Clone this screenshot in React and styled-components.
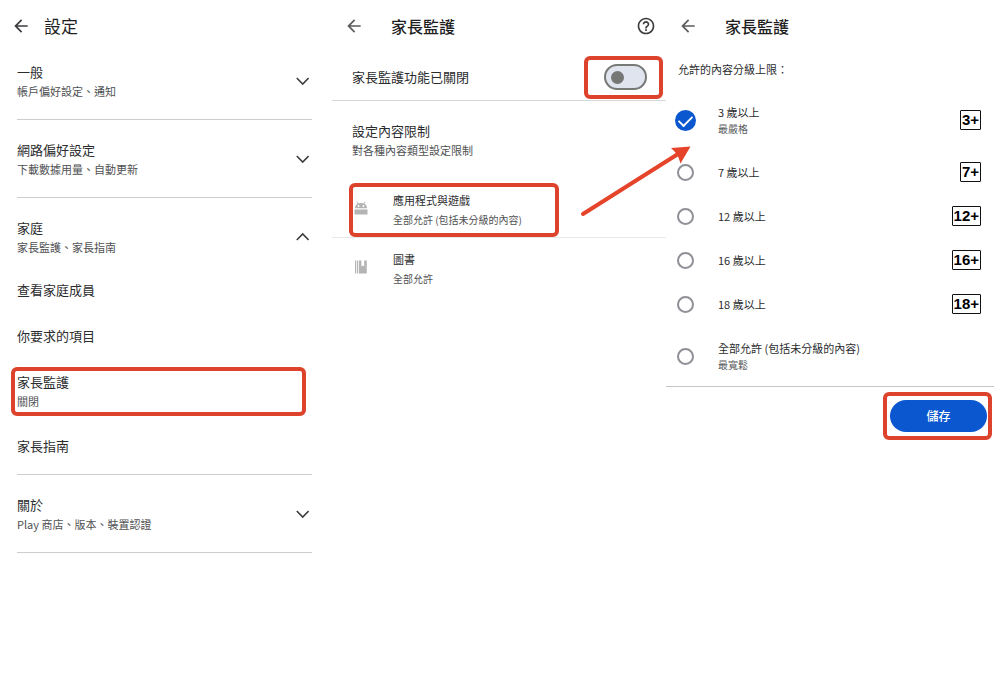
import React, { useState } from 'react';

import styled, { createGlobalStyle } from 'styled-components';
import { MdArrowBack, MdHelpOutline } from 'react-icons/md';

const GlobalStyle = createGlobalStyle`
  * {
    box-sizing: border-box;
  }

  body {
    margin: 0;
    background: #ffffff;
    color: #2b2c2e;
    font-family: 'Noto Sans CJK TC', Roboto, sans-serif;
  }

  button {
    padding: 0;
    border: none;
    background: none;
    color: inherit;
    font: inherit;
    text-align: left;
    cursor: pointer;
  }

  h1, h2, p {
    margin: 0;
    font-weight: 400;
  }
`;

const Page = styled.main`
  display: grid;
  grid-template-columns: 332fr 334fr 328fr;
  align-items: start;
`;

const Panel = styled.section`
  position: relative;
  min-width: 0;
`;

const Header = styled.header`
  display: flex;
  align-items: center;
  gap: ${props => props.$gap || '27px'};
  height: 42px;
  padding: 10px 10px 0 ${props => props.$left || '12px'};
`;

const IconButton = styled.button`
  display: flex;
  color: ${props => props.$color || '#5a5b5d'};
`;

const Heading = styled.h1`
  flex: 1;
  font-size: ${props => props.$size || '16px'};
  font-weight: ${props => props.$weight || 500};
  line-height: 24px;
  color: #1f1f1f;
`;

// Red frame laid over the element that the guide points at
const Marked = styled.div`
  position: relative;

  &::after {
    content: '';
    position: absolute;
    inset: ${props => props.$inset};
    border: 4px solid #dd432c;
    border-radius: 6px;
    pointer-events: none;
  }
`;

const Settings = styled.div`
  padding: 0 20px 0 17px;
`;

const Group = styled.div`
  border-bottom: 1px solid #cdcdcd;
`;

const GroupButton = styled.button`
  display: flex;
  align-items: center;
  justify-content: space-between;
  width: 100%;
  padding: 20px 3px ${props => (props.$open ? '11px' : '19px')} 0;
`;

const Title = styled.span`
  display: block;
  font-size: 13px;
  line-height: 20px;
`;

const Note = styled.span`
  display: block;
  font-size: 11px;
  line-height: 18px;
  color: #505153;
`;

const Items = styled.div`
  padding-bottom: 5px;
`;

const Item = styled.button`
  display: block;
  width: 100%;
  padding: 13px 0;
`;

const SwitchRow = styled.div`
  display: flex;
  align-items: center;
  justify-content: space-between;
  height: 59px;
  padding: 12px 19px 0 20px;
  border-bottom: 1px solid #d6d7d9;
`;

const Switch = styled.input`
  appearance: none;
  display: flex;
  align-items: center;
  width: 43px;
  height: 26px;
  margin: 0;
  padding: 0 5px;
  border: 2px solid #767976;
  border-radius: 13px;
  background: #dfe4ee;
  cursor: pointer;

  &::before {
    content: '';
    width: 13px;
    height: 13px;
    border-radius: 50%;
    background: #747773;
  }

  &:checked {
    justify-content: flex-end;
    border-color: #0b57d0;
    background: #0b57d0;
  }

  &:checked::before {
    background: #ffffff;
  }
`;

const Intro = styled.div`
  padding: 20px 20px 22px;
`;

const ContentItem = styled.button`
  display: flex;
  align-items: center;
  gap: 25px;
  width: 100%;
  padding: ${props => (props.$last ? '11px 20px 8px 22px' : '9px 20px 7px 22px')};
  border-bottom: ${props => (props.$last ? 'none' : '1px solid #e8e8e8')};
`;

const ItemIcon = styled.span`
  padding-bottom: 4px;
`;

const ContentText = styled.span`
  display: block;
  font-size: ${props => (props.$small ? '10px' : '11px')};
  line-height: 20px;
  color: ${props => (props.$small ? '#505153' : '#2b2c2e')};
`;

const Drawing = styled.svg`
  display: block;
  flex: none;
`;

const Arrow = styled.svg`
  position: absolute;
  top: 142px;
  right: -26px;
  z-index: 1;
  pointer-events: none;
`;

const Fields = styled.fieldset`
  min-width: 0;
  margin: 0;
  padding: 0;
  border: none;
  border-bottom: 1px solid #c6c7ca;
`;

const Legend = styled.legend`
  padding: 17px 12px 11px;
  font-size: 11px;
  line-height: 20px;
`;

const Option = styled.label`
  display: flex;
  align-items: center;
  height: ${props => (props.$tall ? '60px' : '44px')};
  padding: 0 13px 0 9px;
  cursor: pointer;
`;

const RadioSlot = styled.span`
  display: flex;
  justify-content: center;
  width: 21px;
  margin-right: 22px;
`;

const Radio = styled.input`
  appearance: none;
  display: flex;
  justify-content: center;
  width: 17px;
  height: 17px;
  margin: 0;
  border: 2px solid #8e9095;
  border-radius: 50%;

  &:checked {
    width: 21px;
    height: 21px;
    border: none;
    background: #0b57d0;
  }

  &:checked::after {
    content: '';
    width: 13px;
    height: 7px;
    margin-top: 5px;
    border: solid #ffffff;
    border-width: 0 0 2px 2px;
    transform: rotate(-45deg) scale(0.9);
  }
`;

const OptionText = styled.span`
  flex: 1;
  font-size: 11px;
  line-height: 18px;
`;

const OptionNote = styled.span`
  display: block;
  font-size: 10px;
  line-height: 16px;
  color: #5a5b5d;
`;

const Badge = styled.span`
  padding: 0 1px;
  border: 1px solid #111111;
  border-radius: 1px;
  color: #000000;
  font-family: 'Liberation Sans Narrow', 'Liberation Sans', sans-serif;
  font-size: 15px;
  font-weight: 700;
  line-height: 18px;
`;

const Footer = styled.footer`
  display: flex;
  justify-content: flex-end;
  padding: 13px 7px 13px 0;
`;

const SaveButton = styled.button`
  display: block;
  width: 97px;
  height: 32px;
  padding-bottom: 2px;
  border-radius: 16px;
  background: #0b57d0;
  color: #ffffff;
  font-size: 12px;
  font-weight: 500;
  text-align: center;
`;

const Chevron = ({ up }) => (
  <Drawing width="14" height="10" viewBox="0 0 14 10" fill="none" stroke="#3c3d3f" strokeWidth="1.6">
    <path d={up ? 'M1.8 8 L7.7 2 L13.6 8' : 'M1.8 2 L7.7 8 L13.6 2'} />
  </Drawing>
);

const AndroidIcon = () => (
  <Drawing width="14" height="14" viewBox="0 0 14 14" fill="#b4b4b4">
    <path d="M1 7.2 C1 5.1 2 3.6 3.6 2.8 L2.4 1.1 L3.1 .6 L4.5 2.4 C6.1 1.8 7.9 1.8 9.5 2.4 L10.9 .6 L11.6 1.1 L10.4 2.8 C12 3.6 13 5.1 13 7.2 Z" />
    <circle cx="4.6" cy="5" r=".9" fill="#fff" />
    <circle cx="9.4" cy="5" r=".9" fill="#fff" />
    <path d="M.5 8.6 H13.5 V13 Q13.5 13.6 12.9 13.6 H1.1 Q.5 13.6 .5 13 Z" />
  </Drawing>
);

const BookIcon = () => (
  <Drawing width="14" height="14" viewBox="0 0 14 14" fill="#b4b4b4">
    <path d="M1 .5 H2 V13.5 H1 Z M2.8 .5 H4.2 V13.5 H2.8 Z" />
    <path d="M5 .5 H7.4 V6.6 L8.8 5.4 L10.2 6.6 V.5 H12.8 V13.5 H5 Z" />
  </Drawing>
);

const groups = [
  { title: '一般', note: '帳戶偏好設定、通知' },
  { title: '網路偏好設定', note: '下載數據用量、自動更新' },
  { title: '家庭', note: '家長監護、家長指南', family: true },
  { title: '關於', note: 'Play 商店、版本、裝置認證' },
];

const ratings = [
  { label: '3 歲以上', note: '最嚴格', badge: '3+' },
  { label: '7 歲以上', badge: '7+' },
  { label: '12 歲以上', badge: '12+' },
  { label: '16 歲以上', badge: '16+' },
  { label: '18 歲以上', badge: '18+' },
  { label: '全部允許 (包括未分級的內容)', note: '最寬鬆' },
];

const SettingsPanel = () => {

  const [familyOpen, setFamilyOpen] = useState(true);

  return (
    <Panel>
      <Header $left="11px" $gap="13px">
        <IconButton aria-label="返回" $color="#3c3d3f"><MdArrowBack size={20} /></IconButton>
        <Heading $size="17px" $weight={400}>設定</Heading>
      </Header>
      <Settings>
        {groups.map(({ title, note, family }) => {
          const open = Boolean(family && familyOpen);

          return (
            <Group key={title}>
              <GroupButton
                $open={open}
                aria-expanded={open}
                onClick={() => family && setFamilyOpen(!familyOpen)}
              >
                <span>
                  <Title>{title}</Title>
                  <Note>{note}</Note>
                </span>
                <Chevron up={open} />
              </GroupButton>
              {open && (
                <Items>
                  <Item><Title>查看家庭成員</Title></Item>
                  <Item><Title>你要求的項目</Title></Item>
                  <Marked $inset="8px 6px 7px -6px">
                    <Item>
                      <Title>家長監護</Title>
                      <Note>關閉</Note>
                    </Item>
                  </Marked>
                  <Item><Title>家長指南</Title></Item>
                </Items>
              )}
            </Group>
          );
        })}
      </Settings>
    </Panel>
  );

};

const ControlsPanel = () => {

  const [enabled, setEnabled] = useState(false);

  return (
    <Panel>
      <Header>
        <IconButton aria-label="返回"><MdArrowBack size={20} /></IconButton>
        <Heading>家長監護</Heading>
        <IconButton aria-label="說明" $color="#3c3d3f"><MdHelpOutline size={20} /></IconButton>
      </Header>
      <SwitchRow>
        <Title as="label" htmlFor="controls">家長監護功能已關閉</Title>
        <Marked $inset="-8px -16px -9px -20px">
          <Switch
            id="controls"
            type="checkbox"
            role="switch"
            checked={enabled}
            onChange={() => setEnabled(!enabled)}
          />
        </Marked>
      </SwitchRow>
      <Intro>
        <Title as="h2">設定內容限制</Title>
        <Note as="p">對各種內容類型設定限制</Note>
      </Intro>
      <Marked $inset="2px 107px 1px 17px">
        <ContentItem>
          <ItemIcon><AndroidIcon /></ItemIcon>
          <span>
            <ContentText>應用程式與遊戲</ContentText>
            <ContentText $small>全部允許 (包括未分級的內容)</ContentText>
          </span>
        </ContentItem>
      </Marked>
      <ContentItem $last>
        <ItemIcon><BookIcon /></ItemIcon>
        <span>
          <ContentText>圖書</ContentText>
          <ContentText $small>全部允許</ContentText>
        </span>
      </ContentItem>
      <Arrow width="112" height="76" viewBox="0 0 112 76">
        <path d="M3 72 L98 12" stroke="#e5442b" strokeWidth="4" strokeLinecap="round" />
        <path d="M110.5 4.5 L91 6 L95 10 L98.5 15.5 L100.5 21.5 Z" fill="#e5442b" />
      </Arrow>
    </Panel>
  );

};

const RatingPanel = () => {

  const [limit, setLimit] = useState('3 歲以上');

  return (
    <Panel>
      <Header>
        <IconButton aria-label="返回"><MdArrowBack size={20} /></IconButton>
        <Heading>家長監護</Heading>
      </Header>
      <Fields>
        <Legend>允許的內容分級上限：</Legend>
        {ratings.map(({ label, note, badge }) => (
          <Option key={label} $tall={Boolean(note)}>
            <RadioSlot>
              <Radio
                type="radio"
                name="rating"
                checked={limit === label}
                onChange={() => setLimit(label)}
              />
            </RadioSlot>
            <OptionText>
              {label}
              {note && <OptionNote>{note}</OptionNote>}
            </OptionText>
            {badge && <Badge>{badge}</Badge>}
          </Option>
        ))}
      </Fields>
      <Footer>
        <Marked $inset="-8px -5px -8px -7px">
          <SaveButton>儲存</SaveButton>
        </Marked>
      </Footer>
    </Panel>
  );

};

const App = () => (
  <>
    <GlobalStyle />
    <Page>
      <SettingsPanel />
      <ControlsPanel />
      <RatingPanel />
    </Page>
  </>
);

export default App;
